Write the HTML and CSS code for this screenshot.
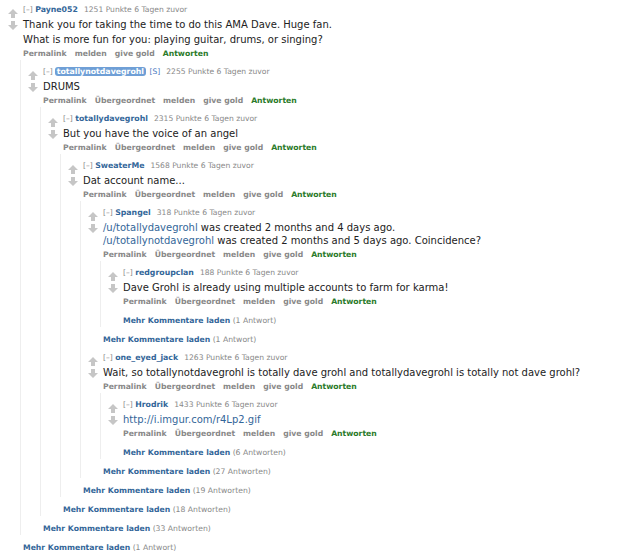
FILE: index.html
```html
<!DOCTYPE html>
<html lang="de">
<head>
<meta charset="utf-8">
<title>Kommentare</title>
<link rel="stylesheet" href="styles.css">
</head>
<body>
<div class="sitetable">

  <div class="comment">
    <div class="midcol">
      <svg class="arrow" viewBox="0 0 10 9"><path d="M5 0L10 5H7V9H3V5H0Z"/></svg>
      <svg class="arrow" viewBox="0 0 10 9"><path d="M5 9L10 4H7V0H3V4H0Z"/></svg>
    </div>
    <div class="entry">
      <p class="tagline"><span class="expand">[–]</span> <a class="author">Payne052</a><span class="score">1251 Punkte</span> <span class="time">6 Tagen zuvor</span></p>
      <div class="md"><p>Thank you for taking the time to do this AMA Dave. Huge fan.</p><p>What is more fun for you: playing guitar, drums, or singing?</p></div>
      <ul class="buttons"><li>Permalink</li><li>melden</li><li>give gold</li><li class="reply">Antworten</li></ul>
    </div>
    <div class="child">

      <div class="comment">
        <div class="midcol">
          <svg class="arrow" viewBox="0 0 10 9"><path d="M5 0L10 5H7V9H3V5H0Z"/></svg>
          <svg class="arrow" viewBox="0 0 10 9"><path d="M5 9L10 4H7V0H3V4H0Z"/></svg>
        </div>
        <div class="entry">
          <p class="tagline"><span class="expand">[–]</span> <a class="author submitter">totallynotdavegrohl</a><span class="flag">[S]</span><span class="score">2255 Punkte</span> <span class="time">6 Tagen zuvor</span></p>
          <div class="md"><p>DRUMS</p></div>
          <ul class="buttons"><li>Permalink</li><li>Übergeordnet</li><li>melden</li><li>give gold</li><li class="reply">Antworten</li></ul>
        </div>
        <div class="child">

          <div class="comment">
            <div class="midcol">
              <svg class="arrow" viewBox="0 0 10 9"><path d="M5 0L10 5H7V9H3V5H0Z"/></svg>
              <svg class="arrow" viewBox="0 0 10 9"><path d="M5 9L10 4H7V0H3V4H0Z"/></svg>
            </div>
            <div class="entry">
              <p class="tagline"><span class="expand">[–]</span> <a class="author">totallydavegrohl</a><span class="score">2315 Punkte</span> <span class="time">6 Tagen zuvor</span></p>
              <div class="md"><p>But you have the voice of an angel</p></div>
              <ul class="buttons"><li>Permalink</li><li>Übergeordnet</li><li>melden</li><li>give gold</li><li class="reply">Antworten</li></ul>
            </div>
            <div class="child">

              <div class="comment">
                <div class="midcol">
                  <svg class="arrow" viewBox="0 0 10 9"><path d="M5 0L10 5H7V9H3V5H0Z"/></svg>
                  <svg class="arrow" viewBox="0 0 10 9"><path d="M5 9L10 4H7V0H3V4H0Z"/></svg>
                </div>
                <div class="entry">
                  <p class="tagline"><span class="expand">[–]</span> <a class="author">SweaterMe</a><span class="score">1568 Punkte</span> <span class="time">6 Tagen zuvor</span></p>
                  <div class="md"><p>Dat account name...</p></div>
                  <ul class="buttons"><li>Permalink</li><li>Übergeordnet</li><li>melden</li><li>give gold</li><li class="reply">Antworten</li></ul>
                </div>
                <div class="child">

                  <div class="comment">
                    <div class="midcol">
                      <svg class="arrow" viewBox="0 0 10 9"><path d="M5 0L10 5H7V9H3V5H0Z"/></svg>
                      <svg class="arrow" viewBox="0 0 10 9"><path d="M5 9L10 4H7V0H3V4H0Z"/></svg>
                    </div>
                    <div class="entry">
                      <p class="tagline"><span class="expand">[–]</span> <a class="author">Spangel</a><span class="score">318 Punkte</span> <span class="time">6 Tagen zuvor</span></p>
                      <div class="md"><p><a class="link">/u/totallydavegrohl</a> was created 2 months and 4 days ago.<br><a class="link">/u/totallynotdavegrohl</a> was created 2 months and 5 days ago. Coincidence?</p></div>
                      <ul class="buttons"><li>Permalink</li><li>Übergeordnet</li><li>melden</li><li>give gold</li><li class="reply">Antworten</li></ul>
                    </div>
                    <div class="child">

                      <div class="comment">
                        <div class="midcol">
                          <svg class="arrow" viewBox="0 0 10 9"><path d="M5 0L10 5H7V9H3V5H0Z"/></svg>
                          <svg class="arrow" viewBox="0 0 10 9"><path d="M5 9L10 4H7V0H3V4H0Z"/></svg>
                        </div>
                        <div class="entry">
                          <p class="tagline"><span class="expand">[–]</span> <a class="author">redgroupclan</a><span class="score">188 Punkte</span> <span class="time">6 Tagen zuvor</span></p>
                          <div class="md"><p>Dave Grohl is already using multiple accounts to farm for karma!</p></div>
                          <ul class="buttons"><li>Permalink</li><li>Übergeordnet</li><li>melden</li><li>give gold</li><li class="reply">Antworten</li></ul>
                        </div>
                      </div>
                      <div class="more"><a>Mehr Kommentare laden</a> <span class="count">(1 Antwort)</span></div>

                    </div>
                  </div>
                  <div class="more"><a>Mehr Kommentare laden</a> <span class="count">(1 Antwort)</span></div>

                  <div class="comment">
                    <div class="midcol">
                      <svg class="arrow" viewBox="0 0 10 9"><path d="M5 0L10 5H7V9H3V5H0Z"/></svg>
                      <svg class="arrow" viewBox="0 0 10 9"><path d="M5 9L10 4H7V0H3V4H0Z"/></svg>
                    </div>
                    <div class="entry">
                      <p class="tagline"><span class="expand">[–]</span> <a class="author">one_eyed_jack</a><span class="score">1263 Punkte</span> <span class="time">6 Tagen zuvor</span></p>
                      <div class="md"><p>Wait, so totallynotdavegrohl is totally dave grohl and totallydavegrohl is totally not dave grohl?</p></div>
                      <ul class="buttons"><li>Permalink</li><li>Übergeordnet</li><li>melden</li><li>give gold</li><li class="reply">Antworten</li></ul>
                    </div>
                    <div class="child">

                      <div class="comment">
                        <div class="midcol">
                          <svg class="arrow" viewBox="0 0 10 9"><path d="M5 0L10 5H7V9H3V5H0Z"/></svg>
                          <svg class="arrow" viewBox="0 0 10 9"><path d="M5 9L10 4H7V0H3V4H0Z"/></svg>
                        </div>
                        <div class="entry">
                          <p class="tagline"><span class="expand">[–]</span> <a class="author">Hrodrik</a><span class="score">1433 Punkte</span> <span class="time">6 Tagen zuvor</span></p>
                          <div class="md"><p><a class="link">http://i.imgur.com/r4Lp2.gif</a></p></div>
                          <ul class="buttons"><li>Permalink</li><li>Übergeordnet</li><li>melden</li><li>give gold</li><li class="reply">Antworten</li></ul>
                        </div>
                      </div>
                      <div class="more"><a>Mehr Kommentare laden</a> <span class="count">(6 Antworten)</span></div>

                    </div>
                  </div>
                  <div class="more"><a>Mehr Kommentare laden</a> <span class="count">(27 Antworten)</span></div>

                </div>
              </div>
              <div class="more"><a>Mehr Kommentare laden</a> <span class="count">(19 Antworten)</span></div>

            </div>
          </div>
          <div class="more"><a>Mehr Kommentare laden</a> <span class="count">(18 Antworten)</span></div>

        </div>
      </div>
      <div class="more"><a>Mehr Kommentare laden</a> <span class="count">(33 Antworten)</span></div>

    </div>
  </div>
  <div class="more"><a>Mehr Kommentare laden</a> <span class="count">(1 Antwort)</span></div>

</div>
</body>
</html>
```

FILE: styles.css
```css
body {
  margin: 0;
  background: #ffffff;
  font-family: "DejaVu Sans", Verdana, sans-serif;
  color: #222222;
}

.sitetable {
  padding: 4px 0 0 1px;
}

.comment {
  display: grid;
  grid-template-columns: 22px 1fr;
}

.child > .comment,
.sitetable > .comment + .comment {
  margin-top: 6px;
}

.midcol {
  display: flex;
  flex-direction: column;
  gap: 3px;
  padding: 5px 0 0 7px;
}

.arrow {
  display: block;
  width: 10px;
  height: 9px;
  fill: #c6c6c6;
}

.entry {
  min-width: 0;
}

.tagline {
  margin: 0;
  font-size: 7.6px;
  line-height: 12px;
  color: #888888;
  white-space: nowrap;
}

.author {
  color: #336699;
  font-weight: bold;
  font-size: 7.8px;
}

.submitter {
  background: #6f9fd6;
  color: #ffffff;
  border-radius: 3px;
  padding: 0 1.5px;
}

.flag {
  color: #4a78c0;
  margin-left: 4px;
}

.score {
  margin-left: 6px;
}

.md {
  margin-top: 2px;
  font-size: 10px;
  line-height: 13px;
  color: #222222;
}

.md p {
  margin: 0;
}

.md p + p {
  margin-top: 2px;
}

.link {
  color: #336699;
}

.buttons {
  list-style: none;
  margin: 2px 0 0;
  padding: 0;
  display: flex;
  gap: 8px;
  font-size: 7.7px;
  line-height: 12px;
  font-weight: bold;
  color: #888888;
}

.buttons .reply {
  color: #2a7a2a;
}

.child {
  grid-column: 1 / -1;
  margin-left: 19px;
  border-left: 1px solid #eeeeee;
}

.more {
  margin-top: 7px;
  padding-left: 22px;
  font-size: 7.7px;
  line-height: 12px;
}

.more a {
  color: #336699;
  font-weight: bold;
}

.more .count {
  color: #888888;
}
```
